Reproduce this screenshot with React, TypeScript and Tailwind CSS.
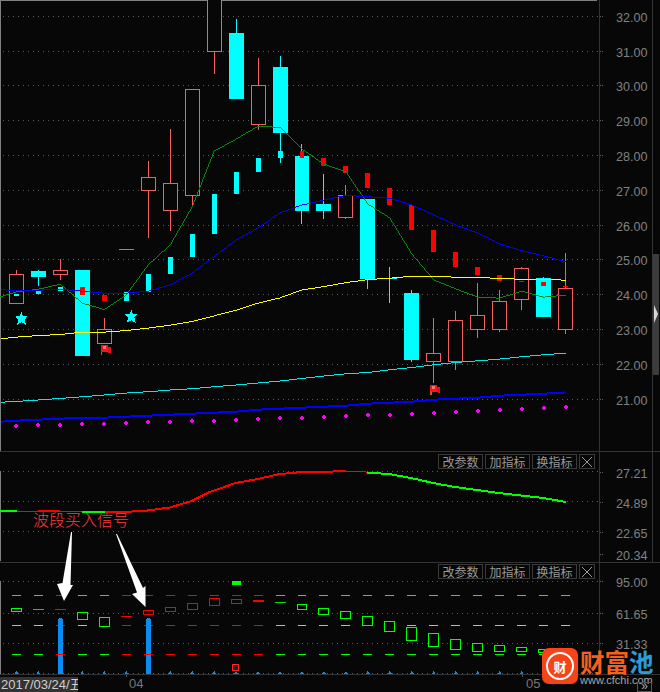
const cx = (i: number) => 16.5 + 22 * i
const px = (y: number) => Math.round(y) + 0.5
const pts = (ys: number[]) => ys.map((y, i) => `${cx(i)},${y}`).join(' ')

// ---- Main pane data (page pixels) ----
type Candle = { t: number; b: number; hi: number; lo: number; up: boolean }
const candles: Candle[] = [
  { t: 274, b: 303, hi: 270, lo: 303, up: true },
  { t: 271, b: 277, hi: 270, lo: 286, up: false },
  { t: 270, b: 274, hi: 259, lo: 280, up: true },
  { t: 270, b: 356, hi: 270, lo: 356, up: false },
  { t: 329, b: 343, hi: 318, lo: 343, up: true },
  { t: 249, b: 249, hi: 249, lo: 249, up: true },
  { t: 177, b: 190, hi: 161, lo: 238, up: true },
  { t: 183, b: 210, hi: 129, lo: 231, up: true },
  { t: 89, b: 195, hi: 89, lo: 207, up: true },
  { t: -2, b: 51, hi: -2, lo: 74, up: true },
  { t: 33, b: 99, hi: 19, lo: 99, up: false },
  { t: 85, b: 124, hi: 58, lo: 130, up: true },
  { t: 67, b: 133, hi: 56, lo: 163, up: false },
  { t: 156, b: 211, hi: 144, lo: 224, up: false },
  { t: 204, b: 211, hi: 174, lo: 219, up: false },
  { t: 195, b: 217, hi: 185, lo: 219, up: true },
  { t: 199, b: 279, hi: 199, lo: 289, up: false },
  { t: 278, b: 279, hi: 267, lo: 303, up: false },
  { t: 293, b: 360, hi: 290, lo: 362, up: false },
  { t: 353, b: 361, hi: 318, lo: 383, up: true },
  { t: 320, b: 361, hi: 311, lo: 370, up: true },
  { t: 315, b: 329, hi: 283, lo: 338, up: true },
  { t: 301, b: 329, hi: 290, lo: 332, up: true },
  { t: 268, b: 299, hi: 267, lo: 310, up: true },
  { t: 278, b: 317, hi: 277, lo: 317, up: false },
  { t: 288, b: 329, hi: 253, lo: 334, up: true },
]
const narrow: [number, number, boolean][] = [
  [294, 296, false], [291, 294, false], [287, 291, false], [287, 295, true], [295, 301, true],
  [292, 301, false], [274, 292, false], [257, 274, false], [234, 257, false], [194, 234, false],
  [172, 194, false], [158, 172, false], [151, 158, false], [151, 158, true], [158, 166, true],
  [166, 173, true], [173, 188, true], [188, 205, true], [205, 230, true], [230, 252, true],
  [252, 267, true], [267, 275, true], [275, 281, true], [281, 282, true], [282, 286, true], [286, 287, true],
]
const greenLine = [292, 289.3, 284.3, 303.3, 309.7, 295, 265, 245, 207, 151, 139, 126, 127.3, 149, 164, 171.7, 204, 218, 254, 280, 289, 297.3, 298.3, 291.3, 297.3, 295.3]
const blueLine = [290.3, 290.3, 289.3, 291.3, 293.3, 293.3, 291.3, 285, 273.3, 256.7, 240, 228, 212.7, 205, 200, 195.3, 196.7, 198.3, 205, 215, 225, 233, 244, 250.7, 256, 261.7]
const yellowLine = [337.3, 335.7, 334.7, 332.3, 332.3, 330.7, 328.3, 325.3, 321.7, 316, 310.3, 303.3, 298, 290, 286.7, 282.7, 279.7, 278.3, 276.3, 276.3, 277.3, 277.3, 278.7, 279.3, 279.3, 280.3]
const cyanLine = [401.7, 400.3, 398.7, 397, 395.3, 393.3, 392, 390.3, 389, 387, 385.3, 383.3, 381.3, 378.7, 376.3, 374, 372.7, 370, 367.7, 365, 362.7, 361, 359.3, 357, 355, 353.3]
const thickBlue = [421, 420, 419, 418, 418, 417, 416, 415, 414, 413, 412, 410, 409, 408, 407, 406, 404, 403, 402, 400, 399, 398, 396, 395, 394, 392.7]
const dots = [426, 425, 425, 424, 424, 423, 422, 422, 421, 421, 420, 419, 418, 418, 417, 416, 415, 415, 414, 413, 412, 411, 410, 409, 408, 407]
const mainGrid = [16, 51, 85, 120, 155, 190, 225, 259, 294, 329, 364, 399]
const mainLabels: [string, number][] = [['32.00', 17], ['31.00', 52], ['30.00', 86], ['29.00', 121], ['28.00', 156], ['27.00', 191], ['26.00', 226], ['25.00', 260], ['24.00', 295], ['23.00', 330], ['22.00', 365], ['21.00', 400]]

// ---- Pane 3 data ----
const redRange = [2, 5, 6, 7, 8, 9, 10, 11]
type Mark = { i: number; t: number; b: number; c: string; fill?: boolean }
const marks: Mark[] = [
  { i: 0, t: 608, b: 611, c: '#00ff00' }, { i: 1, t: 609, b: 609, c: '#00e000' }, { i: 2, t: 609, b: 609, c: '#ff0000' },
  { i: 3, t: 612, b: 619, c: '#00ff00' }, { i: 4, t: 617, b: 626, c: '#00ff00' }, { i: 5, t: 616, b: 616, c: '#ff0000' },
  { i: 6, t: 610, b: 614, c: '#ff0000' }, { i: 7, t: 607, b: 611, c: '#ff0000' }, { i: 8, t: 603, b: 609, c: '#ff0000' },
  { i: 9, t: 598, b: 605, c: '#ff0000' }, { i: 10, t: 599, b: 603, c: '#ff0000' }, { i: 11, t: 600, b: 601, c: '#ff0000', fill: true },
  { i: 12, t: 602, b: 602, c: '#00e000' }, { i: 13, t: 604, b: 609, c: '#00ff00' }, { i: 14, t: 608, b: 614, c: '#00ff00' },
  { i: 15, t: 611, b: 618, c: '#00ff00' }, { i: 16, t: 616, b: 625, c: '#00ff00' }, { i: 17, t: 621, b: 631, c: '#00ff00' },
  { i: 18, t: 627, b: 640, c: '#00ff00' }, { i: 19, t: 633, b: 646, c: '#00ff00' }, { i: 20, t: 639, b: 649, c: '#00ff00' },
  { i: 21, t: 643, b: 651, c: '#00ff00' }, { i: 22, t: 645, b: 651, c: '#00ff00' }, { i: 23, t: 647, b: 651, c: '#00ff00' },
  { i: 24, t: 649, b: 652, c: '#00ff00' },
]

const Grid = ({ ys }: { ys: number[] }) => (
  <>
    {ys.map(y => (
      <line key={y} x1={3} x2={600} y1={y + 0.5} y2={y + 0.5} stroke="#5a5a5a" strokeDasharray="1 4" />
    ))}
  </>
)

const Axis = ({ top, h, labels }: { top: number; h: number; labels: [string, number][] }) => (
  <svg width={52} height={h} viewBox={`600 ${top} 52 ${h}`} className="shrink-0">
    {labels.map(([t, y]) => (
      <g key={t}>
        <line x1={600} x2={603} y1={y - 0.5} y2={y - 0.5} stroke="#5a5a5a" strokeDasharray="1 1" />
        <text x={616} y={y + 5} fontSize={12.6} fill="#808080" fontFamily="'Liberation Sans', sans-serif">{t}</text>
      </g>
    ))}
  </svg>
)

const Buttons = ({ className }: { className: string }) => (
  <div className={`absolute left-[438px] flex gap-[2px] text-[12px] leading-[13px] text-[#999] font-['Noto_Sans_CJK_SC',sans-serif] ${className}`}>
    {['改参数', '加指标', '换指标'].map(b => (
      <div key={b} className="w-[45px] h-[15px] border border-[#3a3a3a] flex items-center justify-center bg-[#070707]">{b}</div>
    ))}
    <div className="w-[16px] h-[15px] border border-[#3a3a3a] flex items-center justify-center bg-[#070707]">
      <svg width={10} height={10} viewBox="0 0 10 10"><path d="M0 0L10 10M10 0L0 10" stroke="#999" fill="none" /></svg>
    </div>
  </div>
)

const Star = ({ x, y }: { x: number; y: number }) => (
  <polygon
    transform={`translate(${x} ${y})`}
    fill="#00ffff"
    points="0,-7 1.8,-2.4 6,-2.4 3,0.8 4.5,6 0,3.4 -4.5,6 -3,0.8 -6,-2.4 -1.8,-2.4"
  />
)

const Flag = ({ x, y }: { x: number; y: number }) => (
  <g transform={`translate(${x} ${y})`}>
    <rect x={0} y={6} width={1.5} height={4} fill="#e05010" />
    <rect x={0} y={0} width={7} height={7} rx={1} fill="#f01818" />
    <rect x={2} y={1} width={3} height={3} fill="#ff7070" />
    <rect x={7} y={2} width={3} height={6} rx={1} fill="#e81010" />
  </g>
)

export default function App() {
  return (
    <div className="relative w-[660px] h-[692px] overflow-hidden bg-[#070707] flex flex-col font-['Liberation_Sans',sans-serif]">
      {/* K-line pane */}
      <div className="flex h-[452px] shrink-0 border-b border-[#333]">
        <svg width={600} height={451} viewBox="0 0 600 451" className="shrink-0 border-r border-[#333]" shapeRendering="crispEdges">
          <rect x={0} y={0} width={598} height={1} fill="#808080" />
          <rect x={0} y={0} width={1} height={451} fill="#808080" />
          <Grid ys={mainGrid} />
          {candles.map((c, i) => {
            const color = c.up ? '#f06060' : '#00ffff'
            return (
              <g key={i}>
                <line x1={cx(i)} x2={cx(i)} y1={c.hi} y2={c.lo} stroke={color} />
                {c.t === c.b ? (
                  <line x1={cx(i) - 7.5} x2={cx(i) + 7.5} y1={px(c.t)} y2={px(c.t)} stroke={color} />
                ) : c.up ? (
                  <rect x={cx(i) - 7} y={px(c.t)} width={14} height={c.b - c.t} fill="#070707" stroke={color} />
                ) : (
                  <rect x={cx(i) - 7.5} y={c.t} width={15} height={c.b - c.t} fill={color} />
                )}
              </g>
            )
          })}
          {narrow.map(([t, b, up], i) => (
            <rect key={i} x={cx(i) - 2.5} y={t} width={5} height={b - t} fill={up ? '#ff0000' : '#00ffff'} />
          ))}
          <polyline points={`0,297 ${pts(greenLine)}`} fill="none" stroke="#0a8a0a" />
          <polyline points={`1,290 ${pts(blueLine)}`} fill="none" stroke="#0000ff" />
          <polyline points={`1,339 ${pts(yellowLine)}`} fill="none" stroke="#ffff00" />
          <polyline points={`1,402.5 ${pts(cyanLine)}`} fill="none" stroke="#00e8e8" />
          <polyline points={`1,422 ${pts(thickBlue)}`} fill="none" stroke="#0000ff" strokeWidth={2} />
          {dots.map((y, i) => (
            <g key={i} fill="#ff00ff">
              <rect x={cx(i) - 2} y={y - 1} width={4} height={2} />
              <rect x={cx(i) - 1} y={y - 2} width={2} height={4} />
            </g>
          ))}
          <Star x={21.5} y={319} />
          <Star x={131.5} y={317} />
          <Flag x={101} y={345} />
          <Flag x={431} y={385} />
        </svg>
        <Axis top={0} h={451} labels={mainLabels} />
        <div className="relative w-[8px] border-l border-[#333] pt-[254px] pr-[1px]">
          <div className="h-[121px] bg-[#3c3c3c]" />
          <svg width={4} height={18} viewBox="0 0 4 18" className="absolute left-[1px] top-[305px]">
            <path d="M0 0L4 9L0 18Z" fill="#d8d8d8" />
          </svg>
        </div>
      </div>

      {/* Trend line pane */}
      <div className="relative flex h-[111px] shrink-0 border-b border-[#333]">
        <svg width={600} height={110} viewBox="0 452 600 110" className="shrink-0 border-r border-[#333]" shapeRendering="crispEdges">
          <rect x={0} y={471} width={1} height={90} fill="#808080" />
          <Grid ys={[471, 501, 531]} />
          <polyline points="0,511 17,511" fill="none" stroke="#00ff00" strokeWidth={2} />
          <polyline points="17,511.5 82,511.5" fill="none" stroke="#ff0000" />
          <polyline points="38,511 60,511" fill="none" stroke="#ff0000" strokeWidth={2} />
          <polyline points="82,512.5 105,512.5" fill="none" stroke="#00ff00" strokeWidth={2} />
          <polyline points="105,512 133,511.5 148,510.5 170,507.5 192,501 210,492 236,483 258,479 280,474 302,472 324,472 347,470.7" fill="none" stroke="#ff0000" strokeWidth={2} />
          <polyline points="347,471 368,472" fill="none" stroke="#ff0000" />
          <polyline points="368,472.5 390,474 412,478 434,483 456,487 478,490 500,493 522,495.5 544,498 567,502" fill="none" stroke="#00ff00" strokeWidth={2} />
        </svg>
        <div className="border-r border-[#333] w-[53px] shrink-0">
          <Axis top={452} h={110} labels={[['27.21', 473], ['24.89', 503], ['22.65', 533], ['20.34', 555]]} />
        </div>
        <Buttons className="top-[2px]" />
      </div>

      {/* Signal pane */}
      <div className="relative flex h-[112px] shrink-0 border-b border-[#333]">
        <svg width={600} height={111} viewBox="0 563 600 111" className="shrink-0 border-r border-[#333]" shapeRendering="crispEdges">
          <rect x={0} y={581} width={1} height={93} fill="#808080" />
          <Grid ys={[581, 613, 643, 673]} />
          {Array.from({ length: 26 }, (_, i) => {
            const red = redRange.includes(i)
            return (
              <g key={i}>
                <rect x={cx(i) - 4.5} y={595} width={9} height={1} fill={red ? '#ff0000' : '#00ff00'} />
                <rect x={cx(i) - 4.5} y={625} width={9} height={1} fill={red ? '#ff0000' : '#ff9a9a'} />
                <rect x={cx(i) - 4.5} y={654} width={9} height={1} fill={red ? '#ff0000' : '#00ff00'} />
                {i < 24 && <path d={`M${cx(i) - 2} 674L${cx(i)} 671L${cx(i) + 2} 674Z`} fill="#0a8cf0" />}
              </g>
            )
          })}
          {marks.map(m =>
            m.t === m.b ? (
              <rect key={m.i} x={cx(m.i) - 5.5} y={m.t} width={11} height={1} fill={m.c} />
            ) : m.fill ? (
              <rect key={m.i} x={cx(m.i) - 5.5} y={m.t} width={11} height={2} fill={m.c} />
            ) : (
              <rect key={m.i} x={cx(m.i) - 5} y={px(m.t)} width={10} height={m.b - m.t} fill="#070707" stroke={m.c} />
            )
          )}
          <rect x={232} y={581} width={9} height={4} fill="#00ff00" />
          {[2, 6].map(i => (
            <g key={i} fill="#0a8cf0">
              <rect x={cx(i) - 2.5} y={619} width={5} height={55} />
              <path d={`M${cx(i) - 2.5} 619L${cx(i)} 617.5L${cx(i) + 2.5} 619Z`} />
              <rect x={cx(i) - 2.5} y={654} width={5} height={1} fill="#ff0000" />
            </g>
          ))}
          <rect x={232.5} y={664.5} width={6.5} height={6.5} fill="#222" stroke="#ff2020" />
        </svg>
        <Axis top={563} h={111} labels={[['95.00', 582], ['61.65', 614], ['31.33', 644]]} />
        <Buttons className="top-[1px]" />
      </div>

      {/* Time axis */}
      <div className="flex flex-1 min-h-0">
        <div className="w-[78px] mt-[2px] bg-[#333] overflow-hidden whitespace-nowrap pl-[1px] text-[13px] leading-[15px] text-[#cfcfcf] font-['Liberation_Sans','Noto_Sans_CJK_SC',sans-serif]">
          2017/03/24/五
        </div>
        <svg width={522} height={16} viewBox="78 676 522 16" className="shrink-0">
          <line x1={126.5} x2={126.5} y1={676} y2={678} stroke="#555" />
          <line x1={522.5} x2={522.5} y1={676} y2={678} stroke="#555" />
          <text x={129} y={689} fontSize={13} fill="#777" fontFamily="'Liberation Sans', sans-serif">04</text>
          <text x={526} y={689} fontSize={13} fill="#777" fontFamily="'Liberation Sans', sans-serif">05</text>
        </svg>
      </div>

      {/* Annotation over the panes */}
      <div className="absolute left-[33px] top-[510px] text-[16px] leading-[18px] text-[#ff3a3a] font-extralight font-['Noto_Sans_CJK_SC',sans-serif]">
        波段买入信号
      </div>
      <svg width={660} height={692} viewBox="0 0 660 692" className="absolute left-0 top-0 pointer-events-none">
        <polygon points="71,532 72,532 70.5,585 73,585 64,601 57,584 62.5,583" fill="#ffffff" />
        <polygon points="116,534 117,534 143,588 145.5,586 145.5,607 132,594 137,592.5" fill="#ffffff" />
      </svg>

      {/* Watermark logo */}
      <div className="absolute left-[542px] top-[648px] flex gap-[2px]">
        <div className="w-[36px] h-[36px] rounded-[7px] bg-[#f5441a] flex items-center justify-center">
          <div className="w-[28px] h-[28px] rounded-full border-[2px] border-white flex items-center justify-center text-[13px] leading-none font-bold text-white font-['Noto_Sans_CJK_SC',sans-serif]">
            财
          </div>
        </div>
        <div className="flex flex-col">
          <div className="flex text-[24.5px] leading-[27px] font-bold text-[#f5601e] font-['Noto_Sans_CJK_SC',sans-serif]">
            财富<span className="text-[#2e9ad6]">池</span>
          </div>
          <div className="text-[11px] leading-[10px] text-[#a8a8a8]">www.cfchi.com</div>
        </div>
      </div>
      <div className="absolute left-[637px] top-[682px] w-[15px] h-[10px] border border-[#555] text-[12px] leading-[7px] text-center text-[#aaa]">»</div>
    </div>
  )
}
